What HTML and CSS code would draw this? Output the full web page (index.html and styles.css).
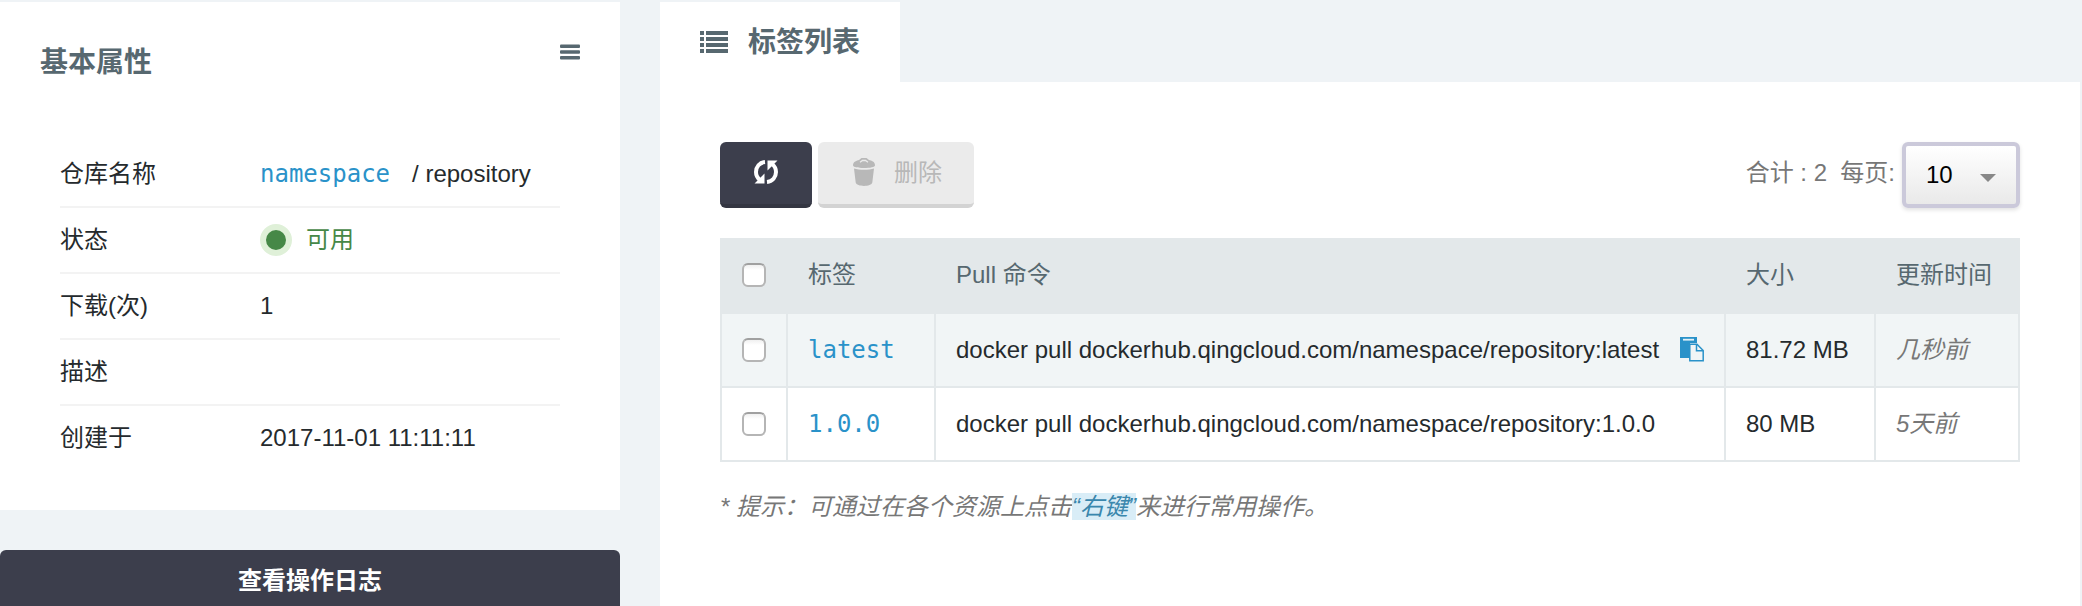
FILE: index.html
```html
<!DOCTYPE html>
<html lang="zh-CN">
<head>
<meta charset="utf-8">
<title>标签列表</title>
<link rel="stylesheet" href="styles.css">
</head>
<body>
<div class="page">
  <aside class="side">
    <section class="card">
      <header class="card-head">
        <h2 class="card-title">基本属性</h2>
        <svg class="menu-icon" width="20" height="16" viewBox="0 0 20 16"><rect y="0.4" width="20" height="3.6" rx="1"/><rect y="6.2" width="20" height="3.6" rx="1"/><rect y="12" width="20" height="3.4" rx="1"/></svg>
      </header>
      <dl class="props">
        <div class="prop"><dt>仓库名称</dt><dd><a class="mono">namespace</a><span class="repo">/ repository</span></dd></div>
        <div class="prop"><dt>状态</dt><dd class="status"><i class="dot"></i>可用</dd></div>
        <div class="prop"><dt>下载(次)</dt><dd>1</dd></div>
        <div class="prop"><dt>描述</dt><dd></dd></div>
        <div class="prop"><dt>创建于</dt><dd>2017-11-01 11:11:11</dd></div>
      </dl>
    </section>
    <button class="log-btn">查看操作日志</button>
  </aside>
  <main class="main">
    <div class="tab">
      <svg class="list-icon" width="28" height="22" viewBox="0 0 28 22"><path d="M0 0h4v4H0zM6 0h22v4H6zM0 6h4v4H0zM6 6h22v4H6zM0 12h4v4H0zM6 12h22v4H6zM0 18h4v4H0zM6 18h22v4H6z"/></svg>
      <span>标签列表</span>
    </div>
    <section class="panel">
      <div class="toolbar">
        <button class="btn btn-dark">
          <svg width="26" height="26" viewBox="0 0 26 26"><g fill="none" stroke="#fff" stroke-width="4"><path d="M12 3C6.5 3.500 3 8 3 13c0 3.200 1.400 6 4 8"/><path d="M14 23c5.500-.5 9-5 9-10 0-3.200-1.400-6-4-8"/></g><path d="M1.500 24.500h10V14.500z M24.500 1.500h-10v10z" fill="#fff"/></svg>
        </button>
        <button class="btn btn-off">
          <svg width="24" height="28" viewBox="0 0 24 28"><path d="M1 7.200C1 3.500 5 2.500 7 2L9.500 0h5L17 2c2.500.5 6 1.500 6 5.200C23 9 18 10 12 10S1 9 1 7.200z" fill="#b8b8b8"/><path d="M8 4.200l2.500-1.700h3L16 4.200" fill="none" stroke="#ebebeb" stroke-width="1.300"/><path d="M2 10.500c5 1.700 15 1.700 20 0l-1.700 14c-.8 4.500-15.800 4.500-16.600 0z" fill="#b8b8b8"/></svg>
          <span>删除</span>
        </button>
        <div class="pager">
          <span class="total">合计 : 2&nbsp; 每页:</span>
          <div class="select"><span>10</span><svg width="16" height="8" viewBox="0 0 16 8"><path d="M0 0h16L8 8z" fill="#888"/></svg></div>
        </div>
      </div>
      <table class="tags">
        <colgroup><col class="c-check"><col class="c-tag"><col class="c-cmd"><col class="c-size"><col class="c-time"></colgroup>
        <thead>
          <tr><th><i class="check"></i></th><th>标签</th><th>Pull 命令</th><th>大小</th><th>更新时间</th></tr>
        </thead>
        <tbody>
          <tr class="odd"><td><i class="check"></i></td><td><a class="mono">latest</a></td>
            <td><div class="cmd"><span>docker pull dockerhub.qingcloud.com/namespace/repository:latest</span>
              <svg width="24" height="25" viewBox="0 0 24 25"><path d="M0 0h17v6h-7v15H0z" fill="#2a92c9"/><path d="M3 1.800h11v1.800H3z" fill="#e4f1f7"/><path d="M9.800 7.200h7.200l6.200 6.300v10.300H9.800z" fill="#f1f5f6" stroke="#2a92c9" stroke-width="1.500"/><path d="M16.500 7.500v6.300H23" fill="none" stroke="#2a92c9" stroke-width="1.500"/></svg></div></td>
            <td>81.72 MB</td><td class="time">几秒前</td></tr>
          <tr><td><i class="check"></i></td><td><a class="mono">1.0.0</a></td>
            <td>docker pull dockerhub.qingcloud.com/namespace/repository:1.0.0</td>
            <td>80 MB</td><td class="time">5天前</td></tr>
        </tbody>
      </table>
      <p class="hint">* 提示：可通过在各个资源上点击<span class="mark">“右键”</span>来进行常用操作。</p>
    </section>
  </main>
</div>
</body>
</html>
```
FILE: styles.css
```css
* { box-sizing: border-box; }
html { height: 606px; overflow: hidden; }
body {
  margin: 0;
  height: 606px;
  background: #eff3f6;
  color: #252a2d;
  font: 24px/36px "Liberation Sans", "Noto Sans CJK SC", sans-serif;
  overflow: hidden;
}
h2, dl, dd, p { margin: 0; }
button { font: inherit; border: 0; }
svg { display: block; flex: none; }
.page { display: flex; gap: 40px; width: 2080px; height: 606px; padding-top: 2px; overflow: hidden; }

.side { width: 620px; flex: none; }
.card { height: 508px; background: #fff; padding: 0 60px; }
.card-head { display: flex; justify-content: space-between; align-items: flex-start; height: 139px; margin: 0 -20px; padding-top: 43px; }
.card-title { font-size: 28px; line-height: 36px; color: #576870; }
.menu-icon { margin-top: -1px; fill: #576870; }
.prop { display: flex; align-items: center; height: 66px; border-bottom: 2px solid #f3f3f3; }
.prop:last-child { border-bottom-color: transparent; }
.prop dt { width: 200px; flex: none; }
.prop dt, .prop dd { padding-bottom: 1px; }
.prop dd { display: flex; align-items: center; white-space: pre; }
.props { padding-top: 1px; }
.mono { font-family: "DejaVu Sans Mono", monospace; color: #2a92c9; }
.repo { margin-left: 22px; }
.status { color: #468847; }
.dot { width: 32px; height: 32px; margin-right: 14px; border: 6px solid #dff0d8; border-radius: 50%; background: #468847; }
.log-btn { display: block; width: 620px; height: 66px; margin-top: 40px; padding: 0 0 4px; border-radius: 6px; background: #3c3e4c; color: #fff; font-weight: bold; }

.main { flex: 1; min-width: 0; }
.tab { display: flex; align-items: center; width: 240px; height: 80px; padding-left: 40px; background: #fff; color: #576870; font-size: 28px; font-weight: bold; }
.tab span { margin-left: 20px; padding-top: 2px; }
.list-icon { fill: #576870; }
.panel { height: 524px; background: #fff; padding: 60px; }
.toolbar { display: flex; gap: 6px; height: 66px; }
.btn { display: flex; align-items: center; justify-content: center; height: 66px; padding: 0; border-radius: 6px; border-bottom: 4px solid; }
.btn-dark { width: 92px; background: #3c3e4c; border-color: #343642; padding-bottom: 3px; }
.btn-off { width: 156px; background: #ebebeb; border-color: #d3d3d3; color: #b8b8b8; justify-content: flex-start; padding: 0 0 2px 34px; }
.btn-off span { margin-left: 18px; padding-top: 2px; }
.pager { display: flex; align-items: center; margin-left: auto; color: #777; }
.total { margin: 0 7px 4px 0; white-space: pre; }
.select { display: flex; align-items: center; justify-content: space-between; width: 118px; height: 66px; padding: 0 20px; border: 4px solid #cbc9da; border-radius: 6px; background: linear-gradient(#fff, #e9e9e9); box-shadow: 0 2px 4px rgba(0,0,0,.12); color: #000; }
.select svg { margin-top: 6px; }

.tags { table-layout: fixed; width: 1300px; margin-top: 30px; border-collapse: separate; border-spacing: 0; border-right: 2px solid #e3e8ea; }
.c-check { width: 66px; }
.c-tag { width: 148px; }
.c-cmd { width: 790px; }
.c-size { width: 150px; }
.tags th, .tags td { padding: 0 0 0 20px; text-align: left; vertical-align: middle; white-space: nowrap; border-left: 2px solid #e3e8ea; border-bottom: 2px solid #e3e8ea; }
.tags th { height: 76px; font-weight: normal; background: #e3e8ea; color: #576870; }
.tags td { height: 74px; padding-bottom: 1px; }
.odd td { background: #f1f5f6; }
.check { display: block; width: 24px; height: 24px; border: 2px solid #b5b5b5; border-top-color: #a0a0a0; border-radius: 6px; background: linear-gradient(#f0f0f0, #fff 5px); }
.cmd { display: flex; align-items: center; gap: 21px; }
.tags .time { color: #777; font-style: italic; }
.hint { margin-top: 27px; color: #777; font-style: italic; white-space: nowrap; }
.mark { background: #d9edf7; color: #3a87ad; }
```
